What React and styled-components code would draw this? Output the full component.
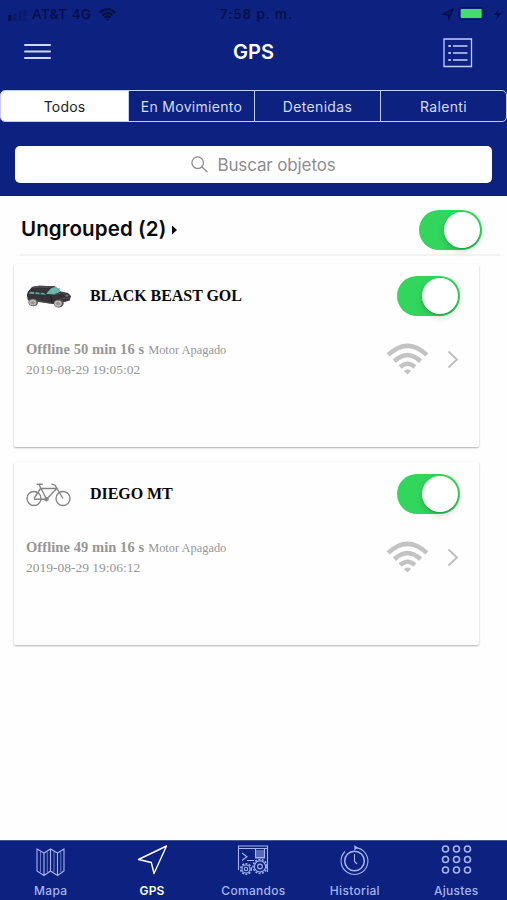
import React, { useState } from "react";
import styled, { createGlobalStyle } from "styled-components";

const navy = "#0d2180";
const pale = "#c3cefa";

const GlobalStyle = createGlobalStyle`
  * { box-sizing: border-box; }
  body { margin: 0; background: #fff; }
  button { border: 0; padding: 0; background: none; font: inherit; color: inherit; }
`;

const Screen = styled.div`
  width: 507px;
  height: 900px;
  display: flex;
  flex-direction: column;
  overflow: hidden;
  background: #fefefe;
  font-family: Inter, "Liberation Sans", sans-serif;
`;

const Header = styled.header`
  height: 196px;
  background: ${navy};
`;

const StatusBar = styled.div`
  height: 28px;
  display: grid;
  grid-template-columns: 1fr auto 1fr;
  align-items: center;
  padding: 0 4px 0 8px;
  color: #070f45;
  font-size: 13.5px;
  font-weight: 500;
`;

const StatusGroup = styled.div`
  display: flex;
  align-items: center;
  justify-content: ${(p) => (p.$end ? "flex-end" : "flex-start")};
`;

const Carrier = styled.span`
  margin: 0 7px 0 5px;
  letter-spacing: 0.5px;
`;

const Clock = styled.span`
  letter-spacing: 0.9px;
  margin-left: 2px;
`;

const TitleBar = styled.div`
  height: 62px;
  display: grid;
  grid-template-columns: 1fr auto 1fr;
  align-items: start;
  padding: 9px 34px 0 24px;
`;

const Title = styled.h1`
  margin: 3px 0 0 10px;
  color: #fff;
  font-size: 20px;
  line-height: 24px;
  font-weight: 600;
  letter-spacing: 0.1px;
`;

const IconButton = styled.button`
  display: flex;
  justify-self: ${(p) => (p.$end ? "end" : "start")};
  margin-top: ${(p) => (p.$end ? 1 : 6)}px;
`;

const Tabs = styled.div`
  height: 32px;
  display: grid;
  grid-template-columns: 127px 126px 126px 126px;
  border: 1px solid ${pale};
  border-radius: 5px;
  overflow: hidden;
`;

const Tab = styled.button`
  border-left: ${(p) => (p.$first ? 0 : 1)}px solid ${pale};
  background: ${(p) => (p.$active ? "#fff" : "transparent")};
  color: ${(p) => (p.$active ? "#222" : "#d3dcfb")};
  font-size: 14px;
  line-height: 30px;
  letter-spacing: ${(p) => p.$track}px;
  padding-top: 1px;
  white-space: nowrap;
`;

const SearchBox = styled.div`
  height: 37px;
  margin: 24px 15px 0;
  display: flex;
  align-items: center;
  justify-content: center;
  gap: 9px;
  padding-left: 20px;
  background: #fff;
  border-radius: 5px;
  color: #8d8d8f;
  font-size: 17px;
  letter-spacing: -0.13px;
`;

const Main = styled.main`
  flex: 1;
`;

const GroupHeader = styled.div`
  height: 60px;
  margin: 0 7px 8px 20px;
  padding: 10px 18px 0 1px;
  display: flex;
  align-items: center;
  border-bottom: 2px solid #f3f3f4;
`;

const GroupName = styled.h2`
  margin: 0 5px 2px 0;
  font-size: 20.5px;
  line-height: 28px;
  font-weight: 600;
  letter-spacing: 0.1px;
  color: #080808;
`;

const Spacer = styled.div`
  flex: 1;
`;

const Track = styled.button`
  width: 63px;
  height: 40px;
  padding: 2px;
  display: flex;
  justify-content: ${(p) => (p.$on ? "flex-end" : "flex-start")};
  border-radius: 20px;
  background: ${(p) => (p.$on ? "#32d65d" : "#dedee0")};
`;

const Knob = styled.span`
  width: 36px;
  height: 36px;
  border-radius: 50%;
  background: #fff;
  box-shadow: 0 3px 7px rgba(0, 0, 0, 0.17), 0 1px 1px rgba(0, 0, 0, 0.16);
`;

const Card = styled.article`
  width: 465px;
  height: 183px;
  margin: 0 0 15px 14px;
  padding: 12px 19px 0 12px;
  background: #fefefe;
  border-radius: 2px;
  box-shadow: 0 1px 2px rgba(0, 0, 0, 0.32);
`;

const CardHead = styled.div`
  height: 40px;
  display: flex;
  align-items: center;
`;

const Vehicle = styled.div`
  width: 46px;
  display: flex;
`;

const CardName = styled.h3`
  flex: 1;
  margin: 0 0 1px 18px;
  font: bold 16px/20px "Liberation Serif", serif;
  letter-spacing: ${(p) => p.$track}px;
  color: #080808;
`;

const CardBody = styled.div`
  display: flex;
  align-items: flex-start;
  margin-top: 24px;
`;

const Details = styled.div`
  flex: 1;
  margin-top: -1px;
  font-family: "Liberation Serif", serif;
  color: #969696;
  line-height: 20px;
`;

const Offline = styled.strong`
  font-size: 14.5px;
  letter-spacing: 0.07px;
`;

const Engine = styled.span`
  font-size: 12.4px;
`;

const Stamp = styled.div`
  font-size: 13.5px;
  line-height: 19px;
`;

const Signal = styled.div`
  display: flex;
  margin: 3px 18px 0 0;
`;

const Chevron = styled.div`
  display: flex;
  margin-top: 10px;
`;

const TabBar = styled.nav`
  height: 60px;
  display: grid;
  grid-template-columns: repeat(5, 1fr);
  background: ${navy};
  border-top: 1px solid #47568f;
`;

const TabItem = styled.button`
  display: flex;
  flex-direction: column;
  align-items: center;
  padding-top: 3px;
  color: ${(p) => (p.$active ? "#fff" : "#a6b5ef")};
  font-size: 12px;
  line-height: 16px;
  font-weight: ${(p) => (p.$active ? 600 : 500)};
  letter-spacing: ${(p) => p.$track}px;
  svg { margin-bottom: 6px; }
`;

const Bars = () => (
  <svg width="19" height="16" viewBox="0 0 19 16">
    <rect y="9" width="3.5" height="6" rx="1" fill="#061047" />
    <g fill="#0b1b70"><rect x="5.5" y="7" width="3" height="8" rx="1" /><rect x="10.5" y="5" width="3" height="10" rx="1" /><rect x="15.5" y="3" width="3" height="12" rx="1" /></g>
  </svg>
);

const Wifi = ({ width, height, color, arc = 4.6 }) => (
  <svg width={width} height={height} viewBox="0 0 44 32" fill="none" stroke={color} strokeWidth={arc}>
    <path d="M2.2 11.8Q22-6.8 41.8 11.8" />
    <path d="M8.6 18.3Q22 5.8 35.4 18.3" />
    <path d="M14.4 24.2Q22 17.5 29.6 24.2" />
    <path d="M18.3 28.2Q22 25.2 25.7 28.2L22 31.9Z" fill={color} stroke="none" />
  </svg>
);

const StatusRight = () => (
  <svg width="61" height="18" viewBox="0 0 61 18">
    <path d="M1 9L11 4 7 14 6 9.8Z" fill="#071044" fillOpacity=".35" stroke="#071044" strokeWidth="1.2" />
    <rect x="17" y="2.5" width="25" height="12" rx="3" fill="none" stroke="#09165e" />
    <rect x="18.7" y="4" width="21" height="9" rx="1" fill="#47db70" />
    <path d="M44 7v4q1.8-2 0-4" fill="#09165e" />
    <path d="M57 4L52 10h3.5L54 15l5.3-7H56Z" fill="#071044" />
  </svg>
);

const MenuIcon = () => (
  <svg width="27" height="18" viewBox="0 0 27 18" stroke="#ced8fb" strokeWidth="2" strokeLinecap="round">
    <path d="M1 2H26M1 8.5H26M1 15H26" />
  </svg>
);

const ListIcon = () => (
  <svg width="30" height="30" viewBox="0 0 30 30" fill="none" stroke="#c3cefa" strokeWidth="1.3">
    <path d="M1 1H28.5V28.5H1ZM10 8H24.5M10 15H24.5M10 22H24.5" />
    <path d="M5.4 8H7.8M5.4 15H7.8M5.4 22H7.8" strokeWidth="2.2" />
  </svg>
);

const SearchIcon = () => (
  <svg width="17" height="17" viewBox="0 0 17 17" fill="none" stroke="#8d8d8f" strokeWidth="1.3" strokeLinecap="round">
    <circle cx="6.7" cy="6.7" r="5.8" /><path d="M11 11L16 15.8" />
  </svg>
);

const Caret = () => (
  <svg width="7" height="10" viewBox="0 0 7 10"><path d="M1 .5L6 5 1 9.5Z" fill="#080808" /></svg>
);

const Car = () => (
  <svg width="46" height="23" viewBox="0 0 46 23">
    <path d="M.8 10L2 6.5 6 2 13 .8 29 1.2 35 6.4 42 8 45 11 43.7 15.5 36 17.8 27 19 2 15.5Z" fill="#353238" />
    <path d="M6 2L13 .8 29 1.2 25 3.1 6.4 3Z" fill="#4c454c" />
    <path d="M3 7.5L5.5 6.7 18 8 20 9.8 3.6 8.7Z" fill="#5ea49d" />
    <path d="M25.5 3L30 1.8 35 6.4 28 9.5 20 8.8Z" fill="#68b8ad" />
    <path d="M9 7L8.8 9M14 7.5L14.2 9.5M24.5 10.5L26 17.8" fill="none" stroke="#171719" strokeWidth=".9" />
    <path d="M28 9.5L36 8 44 10.4M34 14L44 12.8" fill="none" stroke="#5d575b" strokeWidth=".8" />
    <path d="M1.5 14L26 18.5" fill="none" stroke="#59545a" strokeWidth=".8" />
    <ellipse cx="7.2" cy="17.4" rx="4.8" ry="3.9" fill="#5c585b" /><ellipse cx="6.8" cy="17.6" rx="3.6" ry="3" fill="#bdb9b8" />
    <ellipse cx="32.7" cy="18.4" rx="5" ry="4" fill="#5c585b" /><ellipse cx="32" cy="18.6" rx="3.7" ry="3.1" fill="#bdb9b8" />
    <ellipse cx="6.7" cy="17.7" rx="1.8" ry="1.5" fill="#918d8d" /><ellipse cx="32" cy="18.6" rx="1.9" ry="1.5" fill="#918d8d" />
    <path d="M38 10.5l5-.6-1.8 2.2ZM33 5v-2" fill="#aaa7a9" stroke="#353238" strokeWidth=".5" />
  </svg>
);

const Bike = () => (
  <svg width="46" height="25" viewBox="0 0 46 25" fill="none" stroke="#858585" strokeWidth="1.4">
    <circle cx="8" cy="16.5" r="7" /><circle cx="37" cy="16.5" r="7" />
    <path d="M8 16.5L14.5 6.5H30.8L20.5 17.3H8M13 2.5L20.5 17.3M10.7 2.2H16.8M25.5 1.8L29 3.2 37 16.5" />
    <circle cx="20.5" cy="17.3" r="1.6" />
  </svg>
);

const MapIcon = () => (
  <svg width="31" height="33" viewBox="0 0 31 33" fill="none" stroke="currentColor" strokeWidth="1.1">
    <path d="M2 5L9 9 15.5 5 22.5 9 29 5V27L22.5 31.5 15.5 27 9 31.5 2 27ZM9 9V31M15.5 5V27M22.5 9V31" />
    <path d="M5.5 8V28M12.3 8V28M19 8V28M25.8 8V28" strokeWidth=".6" />
  </svg>
);

const GpsIcon = () => (
  <svg width="31" height="33" viewBox="0 0 31 33" fill="none" stroke="currentColor" strokeWidth="1.4" strokeLinejoin="round">
    <path d="M1.5 15.5L29.5 2 17 29.5 14.3 18.5Z" />
  </svg>
);

const Gear = ({ x, y, r }) => (
  <g><circle cx={x} cy={y} r={r} /><circle cx={x} cy={y} r={r + 1.3} strokeWidth="1.5" strokeDasharray="2 1.4" /><circle cx={x} cy={y} r={r * 0.42} /></g>
);

const CommandsIcon = () => (
  <svg width="32" height="33" viewBox="0 0 32 33" fill="none" stroke="currentColor" strokeWidth="1.1">
    <path d="M1.5 26V2H30.5V28M1.5 4.5H30.5M5 9L10 12.7 5 16.5M10 16.5H17" />
    <path d="M18.5 5V14H27.5V5M18.5 7H27.5M18.5 9H27.5M18.5 11H27.5M18.5 13H27.5" />
    <Gear x={9} y={25} r={4} /><Gear x={23} y={22.5} r={5.6} />
  </svg>
);

const HistoryIcon = () => (
  <svg width="31" height="33" viewBox="0 0 31 33" fill="none" stroke="currentColor" strokeWidth="1.1">
    <circle cx="15.5" cy="17" r="9.8" strokeWidth="1.5" />
    <path d="M16 3.6A13.4 13.4 0 1 1 6 7.5M15.5 10V17.5L18 20" />
    <path d="M15.3 1L19 3.7 15.3 6.3Z" fill="currentColor" stroke="none" />
  </svg>
);

const SettingsIcon = () => (
  <svg width="31" height="33" viewBox="0 0 31 33" fill="none" stroke="currentColor" strokeWidth="1.6">
    {[5, 15.5, 26].flatMap((y) => [4.5, 15.5, 26.5].map((x) => <circle key={`${x}-${y}`} cx={x} cy={y} r="3" />))}
  </svg>
);

const tabs = [
  { label: "Todos", track: 0.2 },
  { label: "En Movimiento", track: 0.3 },
  { label: "Detenidas", track: 0.35 },
  { label: "Ralenti", track: 0.35 },
];

const vehicles = [
  { name: "BLACK BEAST GOL", track: -0.05, idle: "50 min 16 s", stamp: "2019-08-29 19:05:02", Icon: Car },
  { name: "DIEGO MT", track: -0.05, idle: "49 min 16 s", stamp: "2019-08-29 19:06:12", Icon: Bike },
];

const sections = [
  { label: "Mapa", Icon: MapIcon, track: 0.3 },
  { label: "GPS", Icon: GpsIcon, track: 0.15 },
  { label: "Comandos", Icon: CommandsIcon, track: 0.3 },
  { label: "Historial", Icon: HistoryIcon, track: 0.32 },
  { label: "Ajustes", Icon: SettingsIcon, track: 0.25 },
];

function Toggle({ label }) {
  const [on, setOn] = useState(true);
  return <Track role="switch" aria-checked={on} aria-label={label} $on={on} onClick={() => setOn(!on)}><Knob /></Track>;
}

function VehicleCard({ name, track, idle, stamp, Icon }) {
  return (
    <Card>
      <CardHead>
        <Vehicle><Icon /></Vehicle>
        <CardName $track={track}>{name}</CardName>
        <Toggle label={name} />
      </CardHead>
      <CardBody>
        <Details>
          <Offline>Offline {idle}</Offline> <Engine>Motor Apagado</Engine>
          <Stamp>{stamp}</Stamp>
        </Details>
        <Signal><Wifi width={43} height={32} color="#c3c3c3" /></Signal>
        <Chevron>
          <svg width="13" height="19" viewBox="0 0 13 19" fill="none" stroke="#bdbdbd" strokeWidth="1.8"><path d="M1.5 1.5L10 9.5 1.5 17.5" /></svg>
        </Chevron>
      </CardBody>
    </Card>
  );
}

export default function App() {
  const [filter, setFilter] = useState("Todos");
  return (
    <>
      <GlobalStyle />
      <Screen>
        <Header>
          <StatusBar>
            <StatusGroup><Bars /><Carrier>AT&amp;T 4G</Carrier><Wifi width={17} height={13} color="#071044" arc={5.8} /></StatusGroup>
            <Clock>7:58 p. m.</Clock>
            <StatusGroup $end><StatusRight /></StatusGroup>
          </StatusBar>
          <TitleBar>
            <IconButton aria-label="Menú"><MenuIcon /></IconButton>
            <Title>GPS</Title>
            <IconButton $end aria-label="Lista"><ListIcon /></IconButton>
          </TitleBar>
          <Tabs>
            {tabs.map(({ label, track }, i) => (
              <Tab key={label} $first={i === 0} $active={filter === label} $track={track} onClick={() => setFilter(label)}>{label}</Tab>
            ))}
          </Tabs>
          <SearchBox><SearchIcon />Buscar objetos</SearchBox>
        </Header>
        <Main>
          <GroupHeader>
            <GroupName>Ungrouped (2)</GroupName><Caret /><Spacer /><Toggle label="Ungrouped" />
          </GroupHeader>
          {vehicles.map((v) => <VehicleCard key={v.name} {...v} />)}
        </Main>
        <TabBar>
          {sections.map(({ label, Icon, track }) => (
            <TabItem key={label} $active={label === "GPS"} $track={track}><Icon />{label}</TabItem>
          ))}
        </TabBar>
      </Screen>
    </>
  );
}
